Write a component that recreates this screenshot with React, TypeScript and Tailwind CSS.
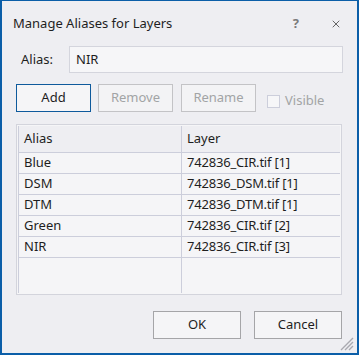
import { X } from "lucide-react";

const rows = [
  { alias: "Blue", layer: "742836_CIR.tif [1]" },
  { alias: "DSM", layer: "742836_DSM.tif [1]" },
  { alias: "DTM", layer: "742836_DTM.tif [1]" },
  { alias: "Green", layer: "742836_CIR.tif [2]" },
  { alias: "NIR", layer: "742836_CIR.tif [3]" },
];

function ResizeGrip() {
  return (
    <svg width="14" height="14" viewBox="0 0 14 14" className="absolute bottom-[2px] right-[3px]">
      <path d="M13 1 L1 13 M13 5 L5 13 M13 9 L9 13" stroke="#a9a9b0" strokeWidth="1.4" />
    </svg>
  );
}

export default function App() {
  return (
    <div
      className="relative flex h-[355px] w-[359px] flex-col border-b-2 border-l-2 border-r-2 border-t border-[#0b5ea8] bg-[#eeeef2] text-[13px] text-[#1e1e1e]"
      style={{ fontFamily: '"Noto Sans", "Liberation Sans", sans-serif' }}
    >
      {/* title bar */}
      <div className="flex h-[45px] items-center pl-[11px] pr-[15px]">
        <span className="flex-1 text-[13px]">Manage Aliases for Layers</span>
        <span className="mr-[31px] text-[13px] font-bold text-[#7a7a7a]">?</span>
        <X className="h-[12px] w-[12px] text-[#555]" strokeWidth={1.8} />
      </div>

      {/* alias input */}
      <div className="flex h-[27px] items-center pl-[19px] pr-[14px]">
        <span className="w-[48px]">Alias:</span>
        <div className="flex h-full flex-1 items-center border border-[#d4d5dd] bg-[#f6f6f8] pl-[6px]">NIR</div>
      </div>

      {/* action buttons */}
      <div className="mt-[11px] flex h-[28px] items-center pl-[14px]">
        <button className="h-full w-[75px] border border-[#0e5a9c] bg-[#f5f5f7] text-[#1e1e1e]">Add</button>
        <button className="ml-[7px] h-full w-[75px] border border-[#c3c3c6] bg-[#f3f3f5] text-[#a2a4a5]">Remove</button>
        <button className="ml-[8px] h-full w-[75px] border border-[#c3c3c6] bg-[#f3f3f5] text-[#a2a4a5]">Rename</button>
        <span className="ml-[11px] mt-[6px] h-[13px] w-[13px] border border-[#cccedb] bg-[#f6f6f8]" />
        <span className="ml-[5px] mt-[6px] text-[#a2a4a5]">Visible</span>
      </div>

      {/* table */}
      <div className="ml-[14px] mr-[15px] mt-[12px] flex h-[171px] flex-col border border-[#d3d4dc] bg-[#f5f5f7] p-px">
        <div className="flex h-[27px] border-b border-[#cccedb] bg-[#eeeef2]">
          <div className="flex w-[163px] items-center border-l border-[#cccedb] pl-[5px]">Alias</div>
          <div className="flex flex-1 items-center border-l border-[#cccedb] pl-[5px]">Layer</div>
        </div>
        {rows.map((r) => (
          <div key={r.alias} className="flex h-[21px] border-b border-[#cccedb]">
            <div className="flex w-[163px] items-center border-l border-[#cccedb] pl-[5px]">{r.alias}</div>
            <div className="flex flex-1 items-center border-l border-[#cccedb] pl-[5px] tracking-[-0.2px]">
              {r.layer}
            </div>
          </div>
        ))}
        <div className="flex flex-1">
          <div className="w-[163px] border-l border-[#cccedb]" />
          <div className="flex-1 border-l border-[#cccedb]" />
        </div>
      </div>

      {/* footer buttons */}
      <div className="mt-[16px] flex h-[28px] justify-end gap-[13px] pr-[15px]">
        <button className="h-full w-[88px] border border-[#a5a5a8] bg-[#f5f5f7]">OK</button>
        <button className="h-full w-[88px] border border-[#a5a5a8] bg-[#f5f5f7]">Cancel</button>
      </div>

      <ResizeGrip />
    </div>
  );
}
